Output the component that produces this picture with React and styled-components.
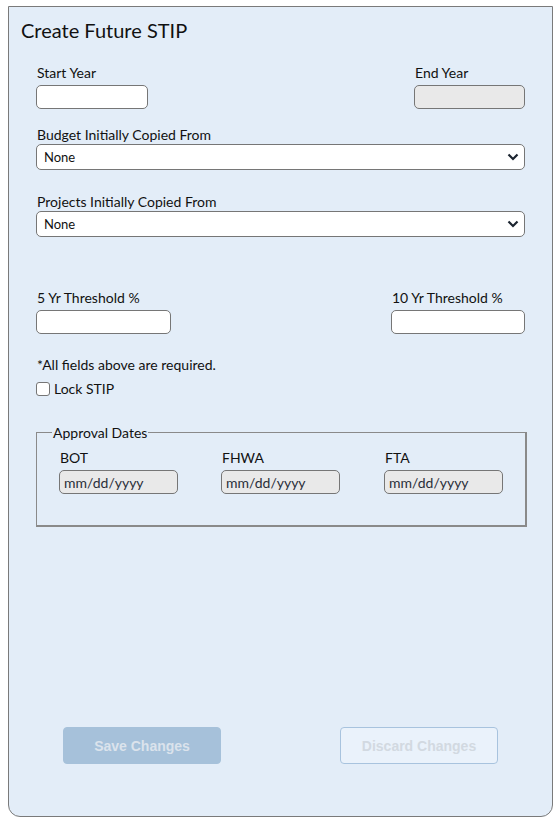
import React from "react";
import styled, { createGlobalStyle } from "styled-components";

const GlobalStyle = createGlobalStyle`
  html, body {
    margin: 0;
    padding: 0;
    background: #ffffff;
  }
  * {
    box-sizing: border-box;
  }
`;

const Panel = styled.div`
  margin: 6px 3px 3px 8px;
  width: 545px;
  height: 811px;
  display: flex;
  flex-direction: column;
  background: #e3edf8;
  border: 1px solid #7a7a7a;
  border-radius: 0 0 12px 12px;
  padding: 11px 12px 0 12px;
  font-family: Lato, "Noto Sans", sans-serif;
  color: #111111;
`;

const Title = styled.h2`
  margin: 0;
  font-size: 20px;
  font-weight: 400;
  line-height: 24px;
`;

const Form = styled.div`
  padding: 0 15px 0 15px;
  display: flex;
  flex-direction: column;
`;

const Row = styled.div`
  display: flex;
  justify-content: space-between;
  align-items: flex-end;
  margin-top: ${(p) => p.$top || 0}px;
`;

const Field = styled.label`
  display: flex;
  flex-direction: column;
  gap: ${(p) => p.$gap ?? 4}px;
  width: ${(p) => (p.$width ? `${p.$width}px` : "auto")};
`;

const LabelText = styled.span`
  font-size: 14px;
  line-height: 17px;
  padding-left: 1px;
`;

const TextInput = styled.input`
  height: 24px;
  width: ${(p) => (p.$width ? `${p.$width}px` : "100%")};
  border: 1px solid #767676;
  border-radius: 5px;
  background: ${(p) => (p.disabled ? "#e9e9e9" : "#ffffff")};
  font-family: inherit;
  font-size: 14px;
  padding: 0 4px;
  color: #2a2f3a;
`;

const SelectWrap = styled.div`
  position: relative;
  width: 100%;
`;

const Select = styled.select`
  appearance: none;
  width: 100%;
  height: 26px;
  border: 1px solid #767676;
  border-radius: 5px;
  background: #ffffff;
  font-family: inherit;
  font-size: 13px;
  color: #111111;
  padding: 0 7px;
`;

const Chevron = styled.svg`
  position: absolute;
  right: 6px;
  top: 9px;
  pointer-events: none;
`;

const Note = styled.div`
  margin-top: 22px;
  font-size: 14px;
  line-height: 17px;
  padding-left: 1px;
`;

const CheckRow = styled.label`
  display: flex;
  align-items: center;
  gap: 4px;
  margin-top: 7px;
  font-size: 14px;
  line-height: 17px;
`;

const Box = styled.span`
  width: 14px;
  height: 14px;
  border: 1px solid #767676;
  border-radius: 3px;
  background: #ffffff;
`;

const Fieldset = styled.fieldset`
  margin: 27px 0 0 0;
  border: 1px solid #8a8a8a;
  border-width: 1px 2px 2px 1px;
  padding: 8px 22px 31px 22px;
`;

const Legend = styled.legend`
  font-size: 14px;
  line-height: 17px;
  padding: 0 1px;
  margin-left: -7px;
`;

const DateGrid = styled.div`
  display: grid;
  grid-template-columns: 162px 163px 119px;
`;

const Footer = styled.div`
  margin-top: auto;
  margin-bottom: 52px;
  display: grid;
  grid-template-columns: 1fr 1fr;
  padding: 0 12px 0 20px;
  align-items: center;
`;

const Button = styled.button`
  justify-self: ${(p) => (p.$outline ? "end" : "start")};
  margin-left: ${(p) => (p.$outline ? 0 : 22)}px;
  margin-right: ${(p) => (p.$outline ? 30 : 0)}px;
  width: 158px;
  height: 37px;
  border-radius: 4px;
  font-family: "Liberation Sans", Arial, sans-serif;
  font-weight: 700;
  font-size: 14px;
  border: 1px solid ${(p) => (p.$outline ? "#a8c3de" : "#a6c1da")};
  background: ${(p) => (p.$outline ? "#eaf2fb" : "#a6c1da")};
  color: ${(p) => (p.$outline ? "#d2d9e1" : "#dbe3ec")};
`;

function Dropdown() {
  return (
    <SelectWrap>
      <Select defaultValue="none">
        <option value="none">None</option>
      </Select>
      <Chevron width="12" height="8" viewBox="0 0 12 8">
        <path d="M1.5 1.5 L6 6 L10.5 1.5" fill="none" stroke="#1b2430" strokeWidth="2.2" />
      </Chevron>
    </SelectWrap>
  );
}

function DateField({ label }) {
  return (
    <Field $gap={4}>
      <LabelText>{label}</LabelText>
      <TextInput type="text" $width={119} disabled value="mm/dd/yyyy" readOnly />
    </Field>
  );
}

export default function App() {
  return (
    <>
      <GlobalStyle />
      <Panel>
        <Title>Create Future STIP</Title>
        <Form>
          <Row $top={22}>
            <Field $width={112}>
              <LabelText>Start Year</LabelText>
              <TextInput type="text" />
            </Field>
            <Field $width={111}>
              <LabelText>End Year</LabelText>
              <TextInput type="text" disabled />
            </Field>
          </Row>

          <Row $top={17}>
            <Field $gap={1} style={{ width: "100%" }}>
              <LabelText>Budget Initially Copied From</LabelText>
              <Dropdown />
            </Field>
          </Row>

          <Row $top={23}>
            <Field $gap={1} style={{ width: "100%" }}>
              <LabelText>Projects Initially Copied From</LabelText>
              <Dropdown />
            </Field>
          </Row>

          <Row $top={52}>
            <Field $width={135}>
              <LabelText>5 Yr Threshold %</LabelText>
              <TextInput type="text" />
            </Field>
            <Field $width={134}>
              <LabelText>10 Yr Threshold %</LabelText>
              <TextInput type="text" />
            </Field>
          </Row>

          <Note>*All fields above are required.</Note>
          <CheckRow>
            <Box />
            Lock STIP
          </CheckRow>

          <Fieldset>
            <Legend>Approval Dates</Legend>
            <DateGrid>
              <DateField label="BOT" />
              <DateField label="FHWA" />
              <DateField label="FTA" />
            </DateGrid>
          </Fieldset>
        </Form>
        <Footer>
          <Button disabled>Save Changes</Button>
          <Button $outline disabled>Discard Changes</Button>
        </Footer>
      </Panel>
    </>
  );
}
